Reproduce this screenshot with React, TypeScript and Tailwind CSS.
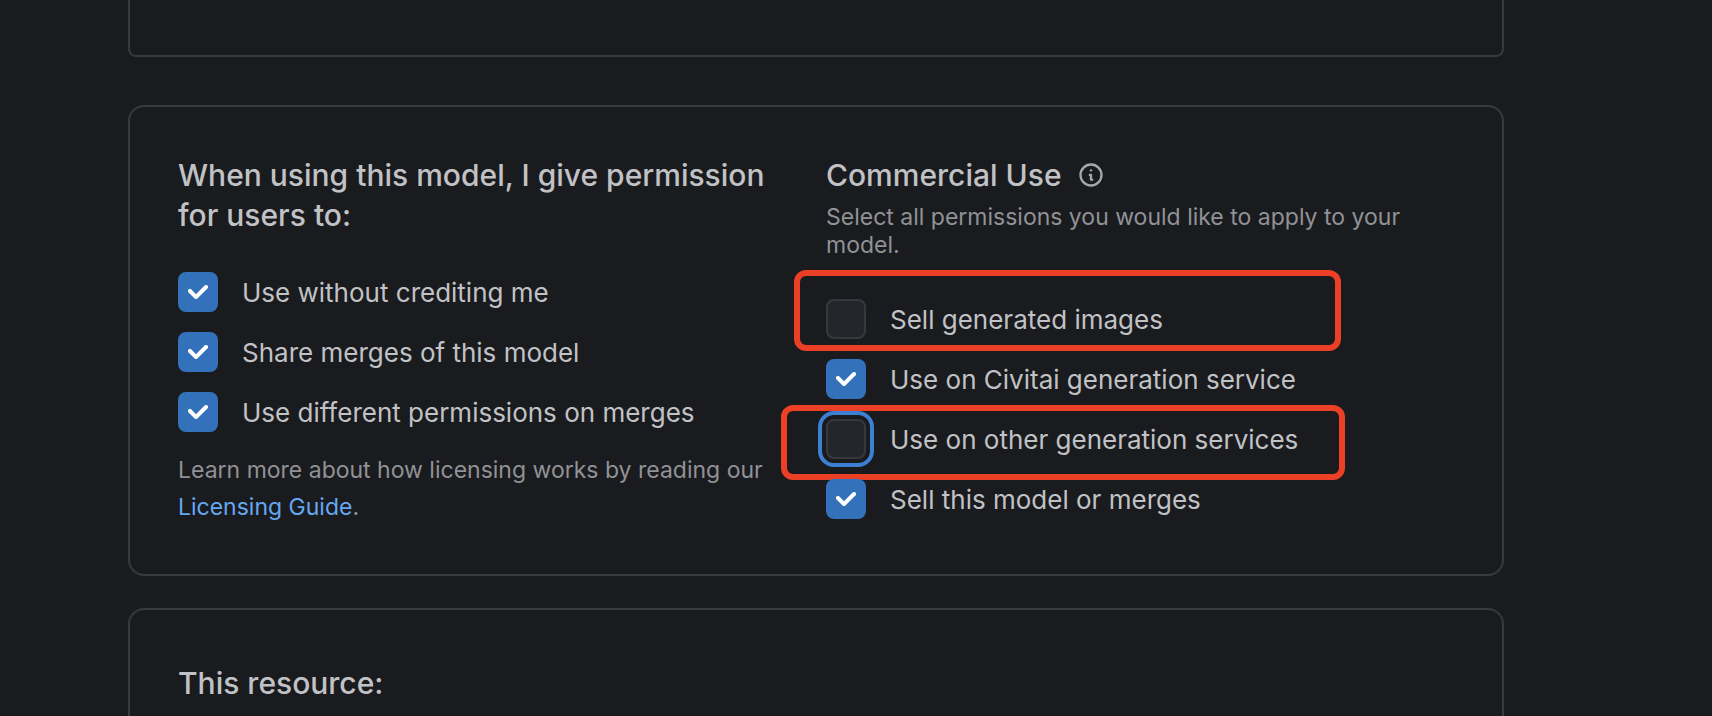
import { useState } from "react";
import clsx from "clsx";

function InfoIcon() {
  return (
    <svg
      viewBox="0 0 24 24"
      className="size-7"
      fill="none"
      stroke="currentColor"
      strokeWidth="2"
      strokeLinecap="round"
      strokeLinejoin="round"
      aria-hidden="true"
    >
      <circle cx="12" cy="12" r="9" />
      <path d="M12 8h.01" />
      <path d="M11 12h1v4h1" />
    </svg>
  );
}

function CheckMark() {
  return (
    <svg
      viewBox="0 0 10 7"
      className="pointer-events-none col-start-1 row-start-1 h-[14px] w-5 text-white"
      fill="currentColor"
      aria-hidden="true"
    >
      <path d="M4 4.586L1.707 2.293A1 1 0 1 0 .293 3.707l3 3a.997.997 0 0 0 1.414 0l5-5A1 1 0 1 0 8.293.293L4 4.586z" />
    </svg>
  );
}

type OptionProps = {
  id: string;
  label: string;
  defaultChecked?: boolean;
  autoFocus?: boolean;
  markClass?: string;
};

function Option({ id, label, defaultChecked = false, autoFocus = false, markClass }: OptionProps) {
  const [checked, setChecked] = useState(defaultChecked);
  return (
    <div className="relative flex items-center gap-6">
      <span className="grid size-10 shrink-0 place-items-center">
        <input
          id={id}
          type="checkbox"
          checked={checked}
          autoFocus={autoFocus}
          onChange={(e) => setChecked(e.target.checked)}
          className={clsx(
            "col-start-1 row-start-1 size-10 appearance-none rounded-lg border-2 focus:outline-4 focus:outline-offset-4 focus:outline-[#3b80d2]",
            checked ? "border-[#3372bb] bg-[#3372bb]" : "border-[#37383d] bg-[#25262b]",
          )}
        />
        {checked && <CheckMark />}
      </span>
      <label htmlFor={id} className="pt-0.5 text-[26px] leading-9 text-[#c1c2c5]">
        {label}
      </label>
      {markClass && (
        <span
          className={clsx(
            "pointer-events-none absolute rounded-xl border-6 border-[#eb4025]",
            markClass,
          )}
        />
      )}
    </div>
  );
}

export default function App() {
  return (
    <main className="h-screen overflow-hidden bg-[#1a1b1e] pr-52 pl-32 font-['Inter','Liberation_Sans',sans-serif] text-[#c1c2c5]">
      <div className="mb-12 h-[57px] rounded-b-lg border-2 border-t-0 border-[#38393d]" />

      <section className="mb-8 grid grid-cols-2 gap-5 rounded-2xl border-2 border-[#38393d] p-12">
        <div>
          <h2 className="text-[30px] leading-10 font-medium">
            When using this model, I give permission for users to:
          </h2>
          <div className="mt-[37px] flex flex-col gap-5">
            <Option id="no-credit" label="Use without crediting me" defaultChecked />
            <Option id="share-merges" label="Share merges of this model" defaultChecked />
            <Option id="different-permissions" label="Use different permissions on merges" defaultChecked />
          </div>
          <p className="mt-5 text-[23px] leading-[37px] text-[#909296]">
            Learn more about how licensing works by reading our{" "}
            <a href="#licensing-guide" className="text-[#64a8f2]">
              Licensing Guide
            </a>
            .
          </p>
        </div>

        <div>
          <div className="flex items-center gap-[15px]">
            <h2 className="text-[30px] leading-10 font-medium">Commercial Use</h2>
            <button type="button" aria-label="About commercial use" className="text-[#a6a7ab]">
              <InfoIcon />
            </button>
          </div>
          <p className="mt-2 text-[23px] leading-7 text-[#909296]">
            Select all permissions you would like to apply to your model.
          </p>
          <div className="mt-10 flex flex-col gap-5">
            <Option
              id="sell-images"
              label="Sell generated images"
              markClass="-top-[29px] -left-8 h-[81px] w-[547px]"
            />
            <Option id="civitai-generation" label="Use on Civitai generation service" defaultChecked />
            <Option
              id="other-generation"
              label="Use on other generation services"
              autoFocus
              markClass="-top-[14px] -left-[45px] h-[75px] w-[564px]"
            />
            <Option id="sell-model" label="Sell this model or merges" defaultChecked />
          </div>
        </div>
      </section>

      <section className="rounded-2xl border-2 border-[#38393d] p-12">
        <h2 className="text-[30px] leading-[50px] font-medium">This resource:</h2>
      </section>
    </main>
  );
}
